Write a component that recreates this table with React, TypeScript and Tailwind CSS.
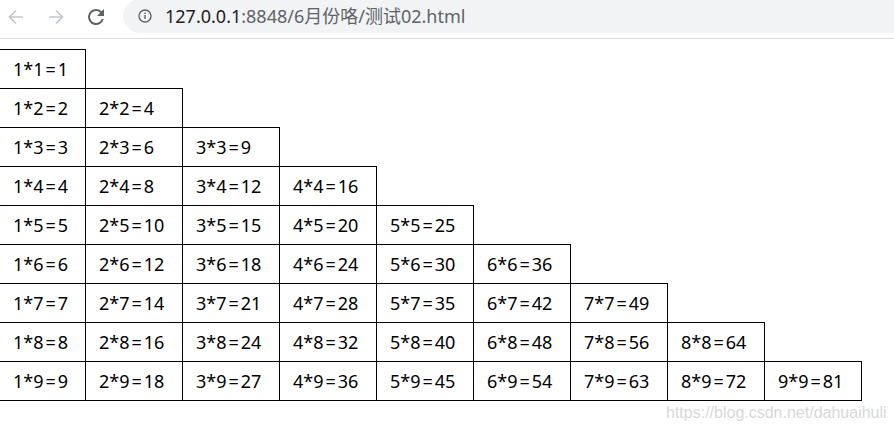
const rows = [1, 2, 3, 4, 5, 6, 7, 8, 9];

function BrowserBar() {
  return (
    <div className="flex h-[39px] items-start border-b border-[#dadce0] bg-white">
      {/* back / forward / reload */}
      <div className="flex h-[33px] items-center">
        <svg className="ml-[8px]" width="16" height="16" viewBox="0 0 16 16" fill="none" stroke="#c4c7ca" strokeWidth="1.6">
          <path d="M15 8H2M8 1.5L1.5 8 8 14.5" />
        </svg>
        <svg className="ml-[24px]" width="16" height="16" viewBox="0 0 16 16" fill="none" stroke="#c4c7ca" strokeWidth="1.6">
          <path d="M1 8h13M8 1.5L14.5 8 8 14.5" />
        </svg>
        <svg className="ml-[20px]" width="24" height="24" viewBox="0 0 24 24" fill="#5f6368">
          <path d="M17.65 6.35A7.96 7.96 0 0 0 12 4a8 8 0 1 0 7.74 10h-2.08A6 6 0 1 1 12 6c1.66 0 3.14.69 4.22 1.78L13 11h7V4l-2.35 2.35z" />
        </svg>
      </div>
      {/* address pill */}
      <div className="ml-[15px] mt-[-1px] flex h-[34px] flex-1 items-center rounded-l-full bg-[#f1f3f4] pl-[15px]">
        <svg width="14" height="14" viewBox="0 0 14 14" fill="none">
          <circle cx="7" cy="7" r="6" stroke="#5f6368" strokeWidth="1.4" />
          <rect x="6.3" y="6" width="1.4" height="4" fill="#5f6368" />
          <rect x="6.3" y="3.6" width="1.4" height="1.4" fill="#5f6368" />
        </svg>
        <span className="ml-[13px] text-[18px] text-[#202124] [font-family:'Noto_Sans','Noto_Sans_CJK_SC',sans-serif]">
          127.0.0.1<span className="text-[#5f6368]">:8848/6月份咯/测试02.html</span>
        </span>
      </div>
    </div>
  );
}

export default function App() {
  return (
    <div className="relative h-[431px] w-[894px] overflow-hidden bg-white">
      <BrowserBar />
      <div className="mt-[10px] flex flex-col text-[18px] text-black [font-family:'Noto_Sans','Noto_Sans_CJK_SC',sans-serif]">
        {rows.map((r) => (
          <div key={r} className={`flex ${r > 1 ? "-mt-px" : ""}`}>
            {Array.from({ length: r }, (_, i) => i + 1).map((c) => (
              <div
                key={c}
                className={`-ml-px flex h-[40px] items-center border border-black pl-[13px] ${
                  c === 1 ? "w-[87px]" : "w-[98px]"
                }`}
              >
                {c}*{r}
                <span className="px-[2px]">=</span>
                {c * r}
              </div>
            ))}
          </div>
        ))}
      </div>
      <div className="absolute left-[666px] top-[401px] text-[16px] text-[#d8d8d8] [font-family:'Liberation_Sans',Arial,sans-serif]">
        https://blog.csdn.net/dahuaihuli
      </div>
    </div>
  );
}
